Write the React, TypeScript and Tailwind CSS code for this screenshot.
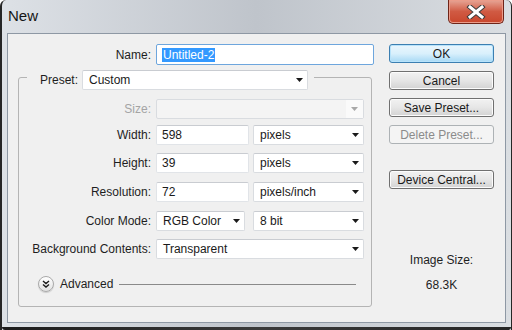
import React from "react";

const font = { fontFamily: '"Liberation Sans", Arial, sans-serif' };

function Arrow({ grey }: { grey?: boolean }) {
  return (
    <svg width="7" height="4" viewBox="0 0 7 4" className="shrink-0">
      <path d="M0 0 H7 L3.5 4 Z" fill={grey ? "#a8a8a8" : "#1a1a1a"} />
    </svg>
  );
}

function Combo({ value, w }: { value: string; w: string }) {
  return (
    <div
      className={`${w} h-[20px] flex items-center justify-between bg-white border border-[#d9dce0] border-t-[#c9ccd1] rounded-[2px] pl-[6px] pr-[4px] text-[12px] text-[#1a1a1a]`}
    >
      <span className="leading-none">{value}</span>
      <Arrow />
    </div>
  );
}

function TextBox({ value, w }: { value: string; w: string }) {
  return (
    <div
      className={`${w} h-[20px] flex items-center bg-white border border-[#e1e4e8] border-t-[#c9ccd1] rounded-[2px] pl-[5px] text-[12px] text-[#1a1a1a]`}
    >
      <span className="leading-none">{value}</span>
    </div>
  );
}

function Label({ children, grey }: { children: React.ReactNode; grey?: boolean }) {
  return (
    <div
      className={`w-[132px] shrink-0 text-right text-[12px] leading-none ${grey ? "text-[#a4a4a4]" : "text-[#1e1e1e]"}`}
    >
      {children}
    </div>
  );
}

function Btn({
  children,
  primary,
  disabled,
}: {
  children: React.ReactNode;
  primary?: boolean;
  disabled?: boolean;
}) {
  const base =
    "w-[105px] h-[19px] rounded-[3px] flex items-center justify-center text-[12px] leading-none";
  if (primary)
    return (
      <div
        className={`${base} border border-[#3c7fb1] bg-gradient-to-b from-[#eaf6fd] via-[#d9f0fc] to-[#a7d9f5] text-[#1a1a1a] shadow-[inset_0_0_0_1px_#b8e3fb]`}
      >
        {children}
      </div>
    );
  if (disabled)
    return (
      <div className={`${base} border border-[#adb2b5] bg-[#f4f4f4] text-[#8b8b8b]`}>
        {children}
      </div>
    );
  return (
    <div
      className={`${base} border border-[#707070] bg-gradient-to-b from-[#f2f2f2] via-[#e6e6e6] to-[#d3d3d3] text-[#1a1a1a] shadow-[inset_0_0_0_1px_#fcfcfc]`}
    >
      {children}
    </div>
  );
}

export default function App() {
  return (
    <div
      style={font}
      className="w-[512px] h-[330px] flex flex-col overflow-hidden bg-gradient-to-r from-[#dde1e6] via-[#bfc4cb] to-[#dadee2] border-l-2 border-r border-[#262626] rounded-t-[6px]"
    >
      {/* title bar */}
      <div className="h-[33px] flex items-start shrink-0">
        <div className="pl-[6px] pt-[8px] text-[15px] leading-none text-[#151515]">New</div>
        <div className="ml-auto mr-[7px] w-[56px] h-[24px] rounded-b-[5px] border border-t-0 border-[#6e2418] bg-gradient-to-b from-[#e6a596] via-[#d05a43] to-[#c9462c] flex items-center justify-center shadow-[inset_0_0_0_1px_#eb9c8a]">
          <svg width="22" height="14" viewBox="0 0 22 14">
            <path
              d="M5 2 L17 12 M17 2 L5 12"
              stroke="#3d3d3d"
              strokeWidth="5"
              strokeLinecap="square"
            />
            <path
              d="M5 2 L17 12 M17 2 L5 12"
              stroke="#ffffff"
              strokeWidth="3"
              strokeLinecap="square"
            />
          </svg>
        </div>
      </div>

      {/* client area */}
      <div className="ml-[5px] w-[499px] h-[290px] shrink-0 border border-[#8e98a4] bg-[#f0f0f0] flex">
        {/* left form */}
        <div className="w-[374px] flex flex-col">
          {/* Name row */}
          <div className="mt-[10px] flex items-center">
            <div className="w-[143px] text-right text-[12px] leading-none text-[#1e1e1e]">Name:</div>
            <div className="ml-[5px] w-[218px] h-[21px] flex items-center bg-white border border-[#6ea6dd] rounded-[2px] pl-[5px]">
              <span className="bg-[#3399ff] text-white text-[12px] leading-[14px] px-[1px]">
                Untitled-2
              </span>
            </div>
          </div>

          <fieldset className="-mt-[1px] ml-[10px] w-[354px] border border-[#b4b4b4] rounded-[3px] px-[8px]">
            <legend className="pt-[6px]">
              <div className="flex items-center">
                <div className="pl-[13px] text-[12px] leading-none text-[#1e1e1e]">Preset:</div>
                <div className="ml-[4px]">
                  <Combo value="Custom" w="w-[226px]" />
                </div>
                <div className="w-[6px]" />
              </div>
            </legend>
            <div className="-mx-[8px] flex flex-col">
              <div className="mt-[9px] flex flex-col">
                <div className="flex items-center">
                  <Label grey>Size:</Label>
                  <div className="ml-[5px] w-[208px] h-[20px] flex border border-[#d9dce0] rounded-[2px] bg-[#f4f4f4]">
                    <div className="flex-1" />
                    <div className="w-[17px] bg-[#fafafa] flex items-center justify-center">
                      <Arrow grey />
                    </div>
                  </div>
                </div>
                <div className="mt-[6px] flex items-center">
                  <Label>Width:</Label>
                  <div className="ml-[5px]">
                    <TextBox value="598" w="w-[93px]" />
                  </div>
                  <div className="ml-[4px]">
                    <Combo value="pixels" w="w-[111px]" />
                  </div>
                </div>
                <div className="mt-[8px] flex items-center">
                  <Label>Height:</Label>
                  <div className="ml-[5px]">
                    <TextBox value="39" w="w-[93px]" />
                  </div>
                  <div className="ml-[4px]">
                    <Combo value="pixels" w="w-[111px]" />
                  </div>
                </div>
                <div className="mt-[9px] flex items-center">
                  <Label>Resolution:</Label>
                  <div className="ml-[5px]">
                    <TextBox value="72" w="w-[93px]" />
                  </div>
                  <div className="ml-[4px]">
                    <Combo value="pixels/inch" w="w-[111px]" />
                  </div>
                </div>
                <div className="mt-[9px] flex items-center">
                  <Label>Color Mode:</Label>
                  <div className="ml-[5px]">
                    <Combo value="RGB Color" w="w-[89px]" />
                  </div>
                  <div className="ml-[8px]">
                    <Combo value="8 bit" w="w-[111px]" />
                  </div>
                </div>
                <div className="mt-[8px] flex items-center">
                  <Label>Background Contents:</Label>
                  <div className="ml-[5px]">
                    <Combo value="Transparent" w="w-[208px]" />
                  </div>
                </div>
              </div>

              {/* Advanced */}
              <div className="mt-[17px] mb-[14px] flex items-center pl-[19px] pr-[15px]">
                <div className="w-[16px] h-[16px] rounded-full border border-[#a9a9a9] bg-gradient-to-b from-[#ffffff] to-[#e2e2e2] flex items-center justify-center shadow-[0_1px_1px_rgba(0,0,0,0.15)]">
                  <svg width="8" height="8" viewBox="0 0 8 8">
                    <path d="M1 1 L4 3.5 L7 1 M1 4.5 L4 7 L7 4.5" stroke="#1a1a1a" strokeWidth="1.4" fill="none" />
                  </svg>
                </div>
                <div className="ml-[6px] text-[12px] leading-none text-[#1e1e1e]">Advanced</div>
                <div className="ml-[6px] flex-1 h-0 border-t border-[#8a8a8a]" />
              </div>
            </div>
          </fieldset>
        </div>

        {/* right buttons */}
        <div className="ml-[7px] w-[105px] flex flex-col">
          <div className="mt-[10px] flex flex-col gap-[8px]">
            <Btn primary>OK</Btn>
            <Btn>Cancel</Btn>
            <Btn>Save Preset...</Btn>
            <Btn disabled>Delete Preset...</Btn>
          </div>
          <div className="mt-[26px]">
            <Btn>Device Central...</Btn>
          </div>
          <div className="mt-[65px] flex flex-col items-center text-[12px] leading-none text-[#1e1e1e]">
            <div>Image Size:</div>
            <div className="mt-[13px]">68.3K</div>
          </div>
        </div>
      </div>

      {/* bottom frame */}
      <div className="flex-1 flex flex-col">
        <div className="h-[4px]" />
        <div className="flex-1 bg-gradient-to-r from-[#1b1b1b] via-[#3a3a3a] to-[#252525] rounded-b-[6px]" />
      </div>
    </div>
  );
}
